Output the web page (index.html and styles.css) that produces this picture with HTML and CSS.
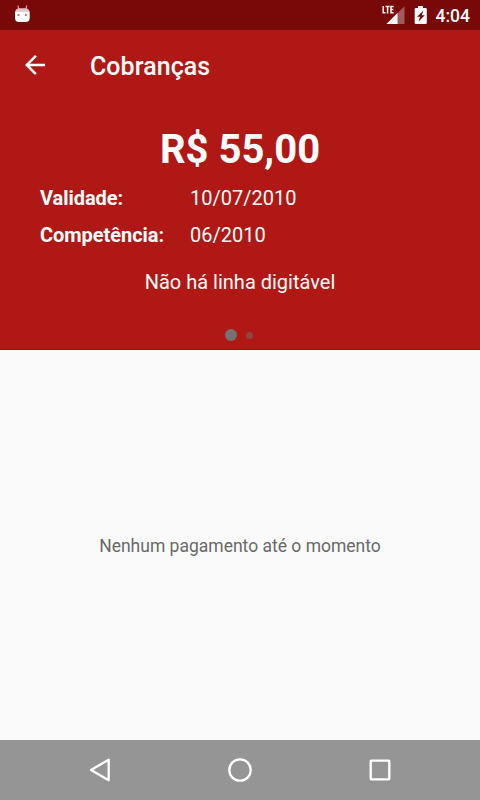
FILE: index.html
```
<!DOCTYPE html>
<html lang="pt-BR">
<head>
<meta charset="utf-8">
<title>Cobranças</title>
<link rel="stylesheet" href="styles.css">
</head>
<body>
<div class="screen">
  <div class="status-bar">
    <svg class="debug-icon" width="18" height="20" viewBox="0 0 18 20">
      <path d="M5 1.500 5.700 5M13.700 1.500 13 5" stroke="#d8aaaa" stroke-width="1.2" fill="none"/>
      <path d="M2.200 8Q2.200 5 6 4.200h6.700q3.800.8 3.800 3.800z" fill="#e3c5c7"/>
      <path d="M2 7.700h14.700v6.300q0 4-4 4H6q-4 0-4-4z" fill="#fff"/>
      <path d="M4.500 10h2v2h-2zM11.800 10h2v2h-2z" fill="#b98285"/>
    </svg>
    <div class="status-right">
      <svg width="24" height="22" viewBox="0 0 24 22">
        <path d="M22.500 2.200V20H4.500z" fill="#a35a5c"/>
        <path d="M15.500 9.100V20H4.500z" fill="#fff"/>
        <path d="M1.200 2v6.800h2.300M3.600 2.600h4M5.600 2.600v6.800M11.700 2.600H9v6.200h2.700M9 5.600h2.400" stroke="#fff" stroke-width="1.5" fill="none"/>
      </svg>
      <svg class="battery" width="14" height="22" viewBox="0 0 14 22">
        <path fill="#fff" d="M4 2h5v2h2.500q1.300 0 1.300 1.300v13.400q0 1.300-1.300 1.300h-9.500q-1.300 0-1.300-1.300V5.300Q.7 4 2 4h2z"/>
        <path fill="#790909" d="M9.500 6.500 3 12.700h3L4.500 17.500l6.300-6.300H7.700z"/>
      </svg>
      <span class="clock">4:04</span>
    </div>
  </div>
  <header class="header">
    <div class="toolbar">
      <svg class="back" width="30" height="30" viewBox="0 0 24 24"><path fill="#fff" d="M20 11H7.830l5.590-5.590L12 4l-8 8 8 8 1.410-1.410L7.830 13H20v-2z"/></svg>
      <h1 class="title">Cobranças</h1>
    </div>
    <div class="amount">R$ 55,00</div>
    <dl class="details">
      <dt>Validade:</dt><dd>10/07/2010</dd>
      <dt>Competência:</dt><dd>06/2010</dd>
    </dl>
    <p class="message">Não há linha digitável</p>
    <div class="pager"><span class="dot active"></span><span class="dot"></span></div>
  </header>
  <main class="content"><p class="empty">Nenhum pagamento até o momento</p></main>
  <nav class="nav-bar">
    <svg width="30" height="30" viewBox="0 0 30 30"><path d="M23.700 4.700v20.600L6 15z"/></svg>
    <svg width="30" height="30" viewBox="0 0 30 30"><circle cx="15" cy="15" r="10.700"/></svg>
    <svg width="30" height="30" viewBox="0 0 30 30"><rect x="5.700" y="5.700" width="18.600" height="18.600" rx=".5"/></svg>
  </nav>
</div>
</body>
</html>
```
FILE: styles.css
```
* { box-sizing: border-box; margin: 0; padding: 0; }
body { font-family: Roboto, sans-serif; background: #fafafa; }
.screen { width: 480px; height: 800px; display: flex; flex-direction: column; overflow: hidden; }
.status-bar {
  height: 30px; flex: none; background: #790909; color: #fff;
  display: flex; justify-content: space-between; align-items: center; padding: 0 10px 0 13px;
}
.debug-icon { margin-bottom: 2px; }
.status-right { display: flex; align-items: center; height: 30px; }
.status-right .battery { margin-left: 8px; }
.clock { font-size: 17.5px; font-weight: 500; line-height: 30px; margin-left: 8px; padding-top: 1px; }
.header { height: 320px; flex: none; background: #b01815; color: #fff; border-bottom: 1px solid #a30b09; }
.toolbar { height: 70px; display: flex; align-items: center; padding-left: 20px; }
.title { margin-left: 40px; font-size: 25px; font-weight: 500; line-height: 30px; padding-top: 4px; letter-spacing: .05px; }
.amount { margin-top: 26px; text-align: center; font-size: 40px; font-weight: 700; line-height: 48px; }
.details {
  display: grid; grid-template-columns: 150px 1fr; grid-auto-rows: 37px;
  margin-top: 6px; padding-left: 40px; font-size: 20px; line-height: 37px;
}
.details dt { font-weight: 700; letter-spacing: -.05px; }
.message { margin-top: 16px; text-align: center; font-size: 20px; line-height: 24px; }
.pager { display: flex; justify-content: center; align-items: center; gap: 9px; height: 12px; margin-top: 35px; padding-right: 3px; }
.dot { width: 7px; height: 7px; border-radius: 50%; background: #904644; }
.dot.active { width: 12px; height: 12px; background: #737373; }
.content { flex: 1; display: flex; align-items: center; justify-content: center; }
.empty { font-size: 17.5px; color: #696969; line-height: 22px; padding-top: 2px; }
.nav-bar { height: 60px; flex: none; background: #959595; display: flex; align-items: center; justify-content: space-between; padding: 0 85px; }
.nav-bar svg { fill: none; stroke: #fff; stroke-width: 2.3; stroke-linejoin: round; }
```
